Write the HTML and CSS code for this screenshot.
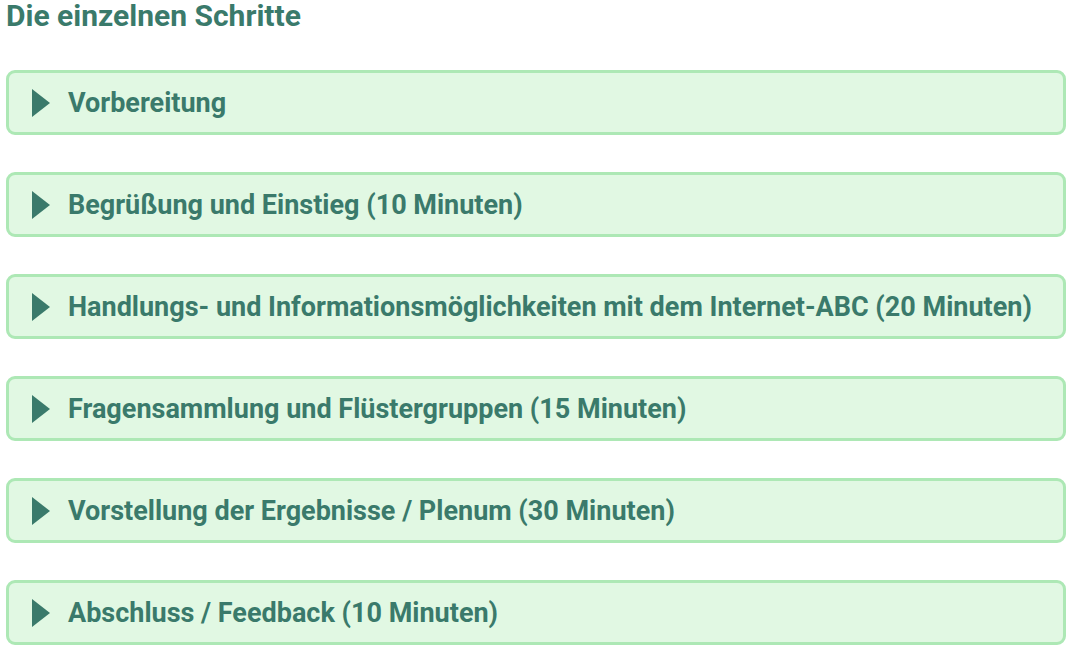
FILE: index.html
```html
<!DOCTYPE html>
<html lang="de">
<head>
    <meta charset="UTF-8">
    <meta name="viewport" content="width=device-width, initial-scale=1.0">
    <title>Die einzelnen Schritte</title>
    <link rel="stylesheet" href="styles.css">
</head>
<body>
    <h2 class="steps-title">Die einzelnen Schritte</h2>

    <div class="steps">
        <details class="step">
            <summary><span class="arrow"></span>Vorbereitung</summary>
        </details>
        <details class="step">
            <summary><span class="arrow"></span>Begrüßung und Einstieg (10 Minuten)</summary>
        </details>
        <details class="step">
            <summary><span class="arrow"></span>Handlungs- und Informationsmöglichkeiten mit dem Internet-ABC (20 Minuten)</summary>
        </details>
        <details class="step">
            <summary><span class="arrow"></span>Fragensammlung und Flüstergruppen (15 Minuten)</summary>
        </details>
        <details class="step">
            <summary><span class="arrow"></span>Vorstellung der Ergebnisse / Plenum (30 Minuten)</summary>
        </details>
        <details class="step">
            <summary><span class="arrow"></span>Abschluss / Feedback (10 Minuten)</summary>
        </details>
    </div>
</body>
</html>
```

FILE: styles.css
```css
body { font-family: Roboto, "Liberation Sans", sans-serif; margin: 0; padding: 0 12px 0 6px; color: #3a7a6b; background: #fff; }
.steps-title { font-size: 30px; font-weight: 700; margin: 0; padding-top: 0; line-height: 32px; }
.steps { display: flex; flex-direction: column; gap: 37px; margin-top: 38px; }
.step { background: #e1f8e3; border: 3px solid #ade8b5; border-radius: 9px; }
.step summary { list-style: none; display: flex; align-items: center; height: 59px; padding-left: 23px; font-size: 27px; font-weight: 700; cursor: pointer; }
.step summary::-webkit-details-marker { display: none; }
.arrow { width: 0; height: 0; border-top: 14.5px solid transparent; border-bottom: 14.5px solid transparent; border-left: 18px solid #3a7a6b; margin-right: 18px; }
```
